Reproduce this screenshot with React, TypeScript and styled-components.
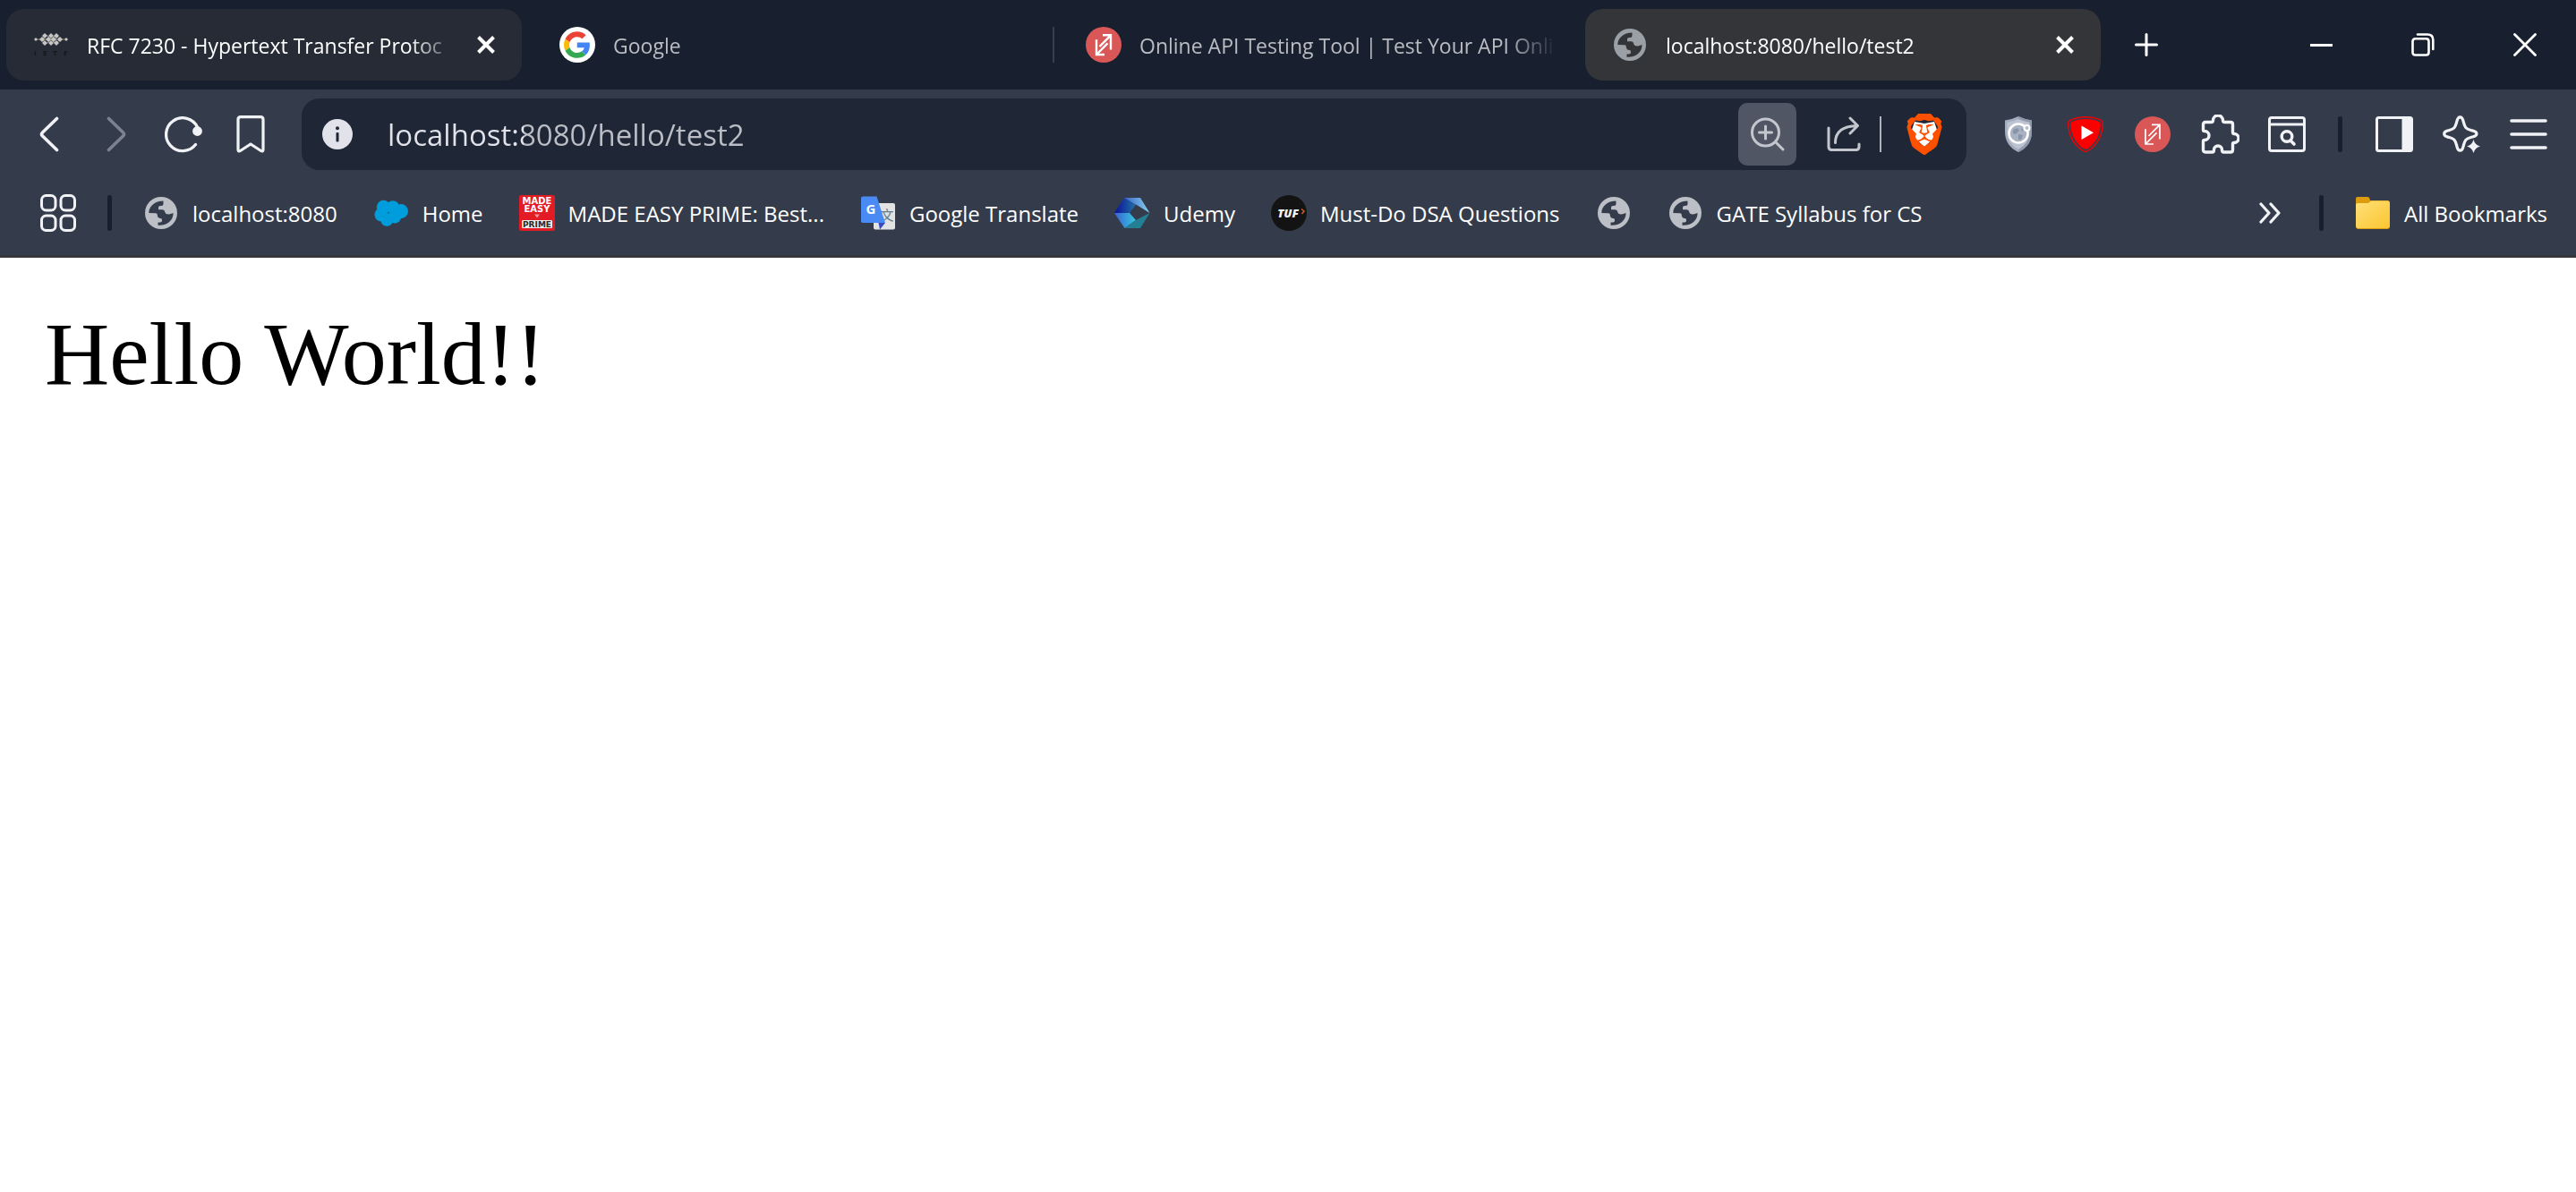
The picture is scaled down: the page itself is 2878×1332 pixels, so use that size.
import React from "react";
import styled, { createGlobalStyle } from "styled-components";
import { SiBrave } from "react-icons/si";

const GlobalStyle = createGlobalStyle`
  * { box-sizing: border-box; }
  body { margin: 0; background: #ffffff; }
  button, input { font: inherit; color: inherit; border: 0; padding: 0; margin: 0; background: none; outline: none; }
  svg { display: block; flex: none; }
`;

const uiFont = `"Open Sans", "Noto Sans", "Noto Sans CJK SC", sans-serif`;

const Chrome = styled.header`
  font-family: ${uiFont};
  font-size: 24px;
  line-height: 32px;
  color: #ffffff;
  background: #343c4c;
  border-bottom: 3px solid #35353b;
`;

const TabStrip = styled.div`
  display: flex;
  align-items: center;
  height: 100px;
  padding-left: 7px;
  font-size: 23px;
  background: #182030;
`;

const TabItem = styled.div<{ $fill: string; $dim?: boolean }>`
  display: flex;
  align-items: center;
  flex: 0 1 576px;
  min-width: 0;
  height: 80px;
  padding: 0 20px 0 30px;
  border-radius: 20px;
  background: ${(p) => p.$fill};
  color: ${(p) => (p.$dim ? "#babcc1" : "#ffffff")};
`;

const TabTitle = styled.button`
  display: flex;
  align-items: center;
  gap: 20px;
  flex: 1;
  min-width: 0;
  text-align: left;
`;

const IconSlot = styled.span`
  display: flex;
  align-items: center;
  justify-content: center;
  flex: none;
  width: 40px;
  height: 40px;
`;

const Label = styled.span`
  padding-top: 2px;
  white-space: nowrap;
`;

const FadeText = styled(Label)`
  flex: 1;
  min-width: 0;
  overflow: hidden;
  mask-image: linear-gradient(to left, transparent 0, #000 56px);
`;

const CloseButton = styled.button`
  display: flex;
  align-items: center;
  justify-content: flex-end;
  width: 50px;
  height: 40px;
  padding-right: 10px;
`;

const TabGap = styled.span`
  display: flex;
  justify-content: center;
  flex: none;
  width: 12px;
`;

const TabLine = styled.span`
  width: 2px;
  height: 40px;
  background: #3a4049;
`;

const NewTabButton = styled.button`
  display: flex;
  align-items: center;
  justify-content: center;
  width: 80px;
  height: 80px;
  margin-left: 11px;
`;

const WindowControls = styled.div`
  display: flex;
  margin-left: auto;
`;

const WindowButton = styled.button`
  display: flex;
  align-items: center;
  justify-content: center;
  width: 114px;
  height: 98px;
`;

const Toolbar = styled.div`
  display: flex;
  align-items: center;
  height: 100px;
  padding: 0 16px 0 17px;
`;

const ToolButton = styled.button`
  display: flex;
  align-items: center;
  justify-content: center;
  flex: none;
  width: 75px;
  height: 70px;
`;

const Divider = styled.span<{ $slot: number }>`
  display: flex;
  justify-content: center;
  flex: none;
  width: ${(p) => p.$slot}px;
  &::before {
    content: "";
    width: 5px;
    height: 40px;
    border-radius: 3px;
    background: #182030;
  }
`;

const AddressBar = styled.form`
  display: flex;
  align-items: center;
  flex: 1;
  min-width: 0;
  height: 80px;
  margin: 0 20px;
  padding: 0 10px 0 20px;
  border-radius: 20px;
  background: #1f2737;
`;

const AddressInput = styled.input`
  flex: 1;
  min-width: 0;
  height: 60px;
  margin-left: 36px;
  font-size: 33px;
  background: linear-gradient(90deg, #e2e3ea 0 152px, #bcbec6 152px);
  background-clip: text;
  -webkit-text-fill-color: transparent;
`;

const ZoomButton = styled.button`
  display: flex;
  align-items: center;
  justify-content: center;
  width: 65px;
  height: 70px;
  border-radius: 10px;
  background: #505664;
`;

const ShareButton = styled.button`
  display: flex;
  align-items: center;
  justify-content: center;
  width: 65px;
  height: 70px;
  margin-left: 20px;
`;

const AddressLine = styled.span`
  width: 2px;
  height: 40px;
  margin: 0 10px 0 8px;
  background: #b0b3ba;
`;

const BookmarkBar = styled.nav`
  display: flex;
  align-items: center;
  height: 85px;
  padding: 0 32px 10px 25px;
`;

const AppsButton = styled.button`
  display: flex;
  align-items: center;
  justify-content: center;
  flex: none;
  width: 80px;
  height: 60px;
`;

const BookmarkList = styled.div`
  display: flex;
  gap: 40px;
  flex: 1;
  min-width: 0;
  padding-left: 20px;
`;

const Bookmark = styled.a`
  display: flex;
  align-items: center;
  gap: 15px;
  flex: none;
  color: inherit;
  text-decoration: none;
`;

const FolderButton = styled.button`
  display: flex;
  align-items: center;
  gap: 15px;
  flex: none;
  margin-left: 20px;
`;

const Page = styled.main`
  padding: 50px;
  font-family: "Liberation Serif", "Times New Roman", serif;
  font-size: 100px;
  line-height: 116px;
  color: #000000;
`;

const Globe = ({ fill, ink }: { fill: string; ink: string }) => (
  <svg width="36" height="36" viewBox="0 0 36 36">
    <circle cx="18" cy="18" r="18" fill={fill} />
    <path
      d="M4.3 18C4.3 10.5 11 4.4 20.5 4.4V7.5Q20.5 10 18 10H17Q15 10 15 12V14.2H19.5Q22 14.5 22.3 17L23 18.5Q24 19.5 27 19.5L31.6 18C31.6 26 25 32.4 14.5 31.8V28.6H17Q19 28.6 19 26.5V25.5Q19 24 17.5 24Q14 24 13.8 20Q13.8 18.3 12 18.3Z"
      fill={ink}
    />
  </svg>
);

const knots = [
  [2, 8, 2], [36, 8, 2], [9, 8, 3], [12, 4, 3], [12, 12, 3], [16, 8, 3],
  [19, 4, 3], [19, 12, 3], [22, 8, 3], [25, 4, 3], [25, 12, 3], [29, 8, 3],
];

const IetfIcon = () => (
  <svg width="38" height="28" viewBox="0 0 38 28">
    <path d="M1 8H37M9 8L14 3L24 13L29 8L24 3L14 13Z" stroke="#9c8a55" strokeWidth="1" fill="none" />
    {knots.map(([x, y, r]) => (
      <path key={`${x}-${y}`} d={`M${x} ${y - r}L${x + r} ${y}L${x} ${y + r}L${x - r} ${y}Z`} fill="#c3c5c9" />
    ))}
    <g fontFamily="DejaVu Sans" fontSize="7" fontWeight="700" fill="#14171d">
      <text x="0" y="26">I</text>
      <text x="10" y="26">E</text>
      <text x="21" y="26">T</text>
      <text x="33" y="26">F</text>
    </g>
  </svg>
);

const GoogleIcon = () => (
  <svg width="40" height="40" viewBox="0 0 40 40">
    <circle cx="20" cy="20" r="20" fill="#ffffff" />
    <g transform="translate(5 5.3) scale(.615)">
      <path fill="#EA4335" d="M24 9.5c3.54 0 6.71 1.22 9.21 3.6l6.85-6.85C35.9 2.38 30.47 0 24 0 14.62 0 6.51 5.38 2.56 13.22l7.98 6.19C12.43 13.72 17.74 9.5 24 9.5z" />
      <path fill="#4285F4" d="M46.98 24.55c0-1.57-.15-3.09-.38-4.55H24v9.02h12.94c-.58 2.96-2.26 5.48-4.78 7.18l7.73 6c4.51-4.18 7.09-10.36 7.09-17.65z" />
      <path fill="#FBBC05" d="M10.53 28.59c-.48-1.45-.76-2.99-.76-4.59s.27-3.14.76-4.59l-7.98-6.19C.92 16.46 0 20.12 0 24c0 3.88.92 7.54 2.56 10.78l7.97-6.19z" />
      <path fill="#34A853" d="M24 48c6.48 0 11.93-2.13 15.89-5.81l-7.73-6c-2.15 1.45-4.92 2.3-8.16 2.3-6.26 0-11.57-4.22-13.47-9.91l-7.98 6.19C6.51 42.62 14.62 48 24 48z" />
    </g>
  </svg>
);

const ApiIcon = ({ weight }: { weight: number }) => (
  <svg width="40" height="40" viewBox="0 0 40 40">
    <circle cx="20" cy="20" r="20" fill="#d95757" />
    <path
      d="M19 9.3H28V25.6M12 14.3V31H21M15.5 22L27.5 9.8M12.5 30.5L24.5 18.3"
      fill="none"
      stroke="#ffffff"
      strokeWidth={weight}
    />
  </svg>
);

const SalesforceIcon = () => (
  <svg width="38" height="32" viewBox="0 0 40 32">
    <g fill="#009ddc">
      <circle cx="11" cy="9" r="8" />
      <circle cx="22" cy="9" r="7.5" />
      <circle cx="31.5" cy="14" r="8.5" />
      <circle cx="8.5" cy="18" r="8" />
      <circle cx="15" cy="24" r="7.5" />
      <circle cx="24" cy="20" r="8" />
    </g>
  </svg>
);

const MadeEasyIcon = () => (
  <svg width="40" height="40" viewBox="0 0 40 40">
    <rect width="40" height="40" rx="2" fill="#e21b24" />
    <rect x="3" y="28" width="34" height="9" rx="1" fill="#eeeeee" />
    <path d="M17 21.5H23L20 25.5Z" fill="#e99499" />
    <g fontFamily="DejaVu Sans" fontWeight="700" textAnchor="middle">
      <text x="20" y="10" fontSize="10" fill="#ffffff">MADE</text>
      <text x="20" y="19" fontSize="10" fill="#ffffff">EASY</text>
      <text x="20" y="36" fontSize="9" fill="#2a2a2a">PRIME</text>
    </g>
  </svg>
);

const TranslateIcon = () => (
  <svg width="38" height="38" viewBox="0 0 38 38">
    <rect x="14" y="8" width="24" height="29.5" rx="2" fill="#e3e3e3" />
    <path d="M19.5 30H27L21 37.5Z" fill="#3a4bc0" />
    <text x="29" y="27" fontFamily="Noto Sans CJK SC" fontSize="15" textAnchor="middle" fill="#5f7f8c">文</text>
    <path d="M2 .5H17.5L27 30H2Q0 30 0 28V2.5Q0 .5 2 .5Z" fill="#4a8af4" />
    <text x="11" y="20" fontFamily="Open Sans" fontWeight="700" fontSize="15" textAnchor="middle" fill="#ffffff">G</text>
  </svg>
);

const UdemyIcon = () => (
  <svg width="40" height="36" viewBox="0 0 40 36">
    <defs>
      <linearGradient id="gemLeft"><stop stopColor="#0a0f9b" /><stop offset="1" stopColor="#2373a3" /></linearGradient>
      <linearGradient id="gemTop"><stop stopColor="#3b63c9" /><stop offset="1" stopColor="#86d2ee" /></linearGradient>
      <linearGradient id="gemLow"><stop stopColor="#3a62d4" /><stop offset="1" stopColor="#35c7dc" /></linearGradient>
    </defs>
    <path d="M0 18L11 1L24 8.5L17 18Z" fill="url(#gemLeft)" />
    <path d="M11 1H29L39.5 18L24 8.5Z" fill="url(#gemTop)" />
    <path d="M0 18H17L24 26L11.5 35Z" fill="url(#gemLow)" />
    <path d="M24 26L39.5 18L29 35H11.5Z" fill="#237f93" />
  </svg>
);

const TufIcon = () => (
  <svg width="40" height="40" viewBox="0 0 40 40">
    <circle cx="20" cy="20" r="20" fill="#131313" />
    <text x="19" y="24.5" fontFamily="Open Sans" fontWeight="800" fontStyle="italic" fontSize="13" textAnchor="middle" fill="#f2f2f2">TUF</text>
    <path d="M34 15.5L37 18L34.5 21" fill="none" stroke="#c9602c" strokeWidth="1.5" />
  </svg>
);

const GuardIcon = () => (
  <svg width="32" height="40" viewBox="0 0 32 40">
    <path d="M16 0Q23 3.5 31 4.5V17Q31 33 16 40Q1 33 1 17V4.5Q9 3.5 16 0Z" fill="#a3adbd" />
    <path d="M16 0Q23 3.5 31 4.5V17Q31 33 16 40Z" fill="#8f9aac" />
    <path d="M16 3Q22 6 28.5 6.8V17Q28.5 30 16 37Q3.5 30 3.5 17V6.8Q10 6 16 3Z" fill="#bcc4d1" />
    <circle cx="16" cy="19" r="10.5" fill="#a9b2c2" stroke="#ffffff" strokeWidth="2.5" />
    <path d="M10 15L15 13L17 16L13 20L10 19ZM16 20L21 21L19 26H16ZM19 13L22 15L20 17Z" fill="#8994a8" />
    <circle cx="25.5" cy="13" r="3" fill="#b5bdcb" stroke="#ffffff" strokeWidth="2" />
  </svg>
);

const PlayShieldIcon = () => (
  <svg width="40" height="40" viewBox="0 0 40 40">
    <path d="M20 .7Q30 .7 37.5 4.5Q39.5 5.5 39.3 8.5Q38.5 28 23 38.5Q20 40.2 17 38.5Q1.5 28 .7 8.5Q.5 5.5 2.5 4.5Q10 .7 20 .7Z" fill="none" stroke="#f60000" strokeWidth="1.4" />
    <path d="M20 3Q29 3 35.5 6.2Q37 7 36.9 9Q36 26.5 22.5 36Q20 37.6 17.5 36Q4 26.5 3.1 9Q3 7 4.5 6.2Q11 3 20 3Z" fill="#fb0000" />
    <path d="M15.5 10.5V26L29 18.2Z" fill="#ffffff" />
  </svg>
);

const FolderIcon = () => (
  <svg width="38" height="36" viewBox="0 0 38 36">
    <defs>
      <linearGradient id="folder" x1="0" y1="0" x2="1" y2="1"><stop stopColor="#ffe07a" /><stop offset="1" stopColor="#fbc62f" /></linearGradient>
    </defs>
    <path d="M0 6V2Q0 0 2 0H13Q15 0 15.5 2L16 4H35Q38 4 38 7V33Q38 36 35 36H3Q0 36 0 33Z" fill="#dc9c0e" />
    <path d="M0 9Q0 7 2 7H14L17 4.5H36Q38 4.5 38 7V32Q38 35 35 35H3Q0 35 0 32Z" fill="url(#folder)" />
  </svg>
);

const Stroke = ({ w, h, d, weight = 3, color = "#f1f2f5" }: { w: number; h: number; d: string; weight?: number; color?: string }) => (
  <svg width={w} height={h} viewBox={`0 0 ${w} ${h}`} fill="none" stroke={color} strokeWidth={weight} strokeLinecap="round" strokeLinejoin="round">
    <path d={d} />
  </svg>
);

const CloseCross = () => (
  <svg width="20" height="20" viewBox="0 0 20 20">
    <path d="M1.5 1.5L18.5 18.5M18.5 1.5L1.5 18.5" stroke="#ffffff" strokeWidth="4" />
  </svg>
);

const ReloadIcon = () => (
  <svg width="42" height="42" viewBox="0 0 42 42" fill="none">
    <path d="M34.5 32.5A18.4 18.4 0 1 1 36.5 13" stroke="#f1f2f5" strokeWidth="3.3" strokeLinecap="round" />
    <circle cx="36.5" cy="17.5" r="5.4" fill="#f1f2f5" />
  </svg>
);

const InfoIcon = () => (
  <svg width="34" height="34" viewBox="0 0 34 34">
    <circle cx="17" cy="17" r="17" fill="#e2e3ea" />
    <circle cx="17" cy="10.3" r="2" fill="#1f2737" />
    <rect x="15.5" y="15" width="3" height="10.5" rx="1" fill="#1f2737" />
  </svg>
);

const AppsIcon = () => (
  <svg width="40" height="42" viewBox="0 0 40 42" fill="none" stroke="#f1f2f5" strokeWidth="3">
    <rect x="1.5" y="1.5" width="15.5" height="16.5" rx="5" />
    <rect x="23" y="1.5" width="15.5" height="16.5" rx="5" />
    <rect x="1.5" y="24" width="15.5" height="16.5" rx="5" />
    <rect x="23" y="24" width="15.5" height="16.5" rx="5" />
  </svg>
);

const BraveIcon = () => (
  <svg width="40" height="46" viewBox="0 0 40 46">
    <path d="M9 9L20 11L31 9L34 18L29 29L20 37L11 29L6 18Z" fill="#ffffff" />
    <SiBrave x="-3" y="0" size={46} color="#ff5000" />
  </svg>
);

const PuzzleIcon = () => (
  <Stroke
    w={44}
    h={44}
    weight={3.4}
    d="M6 8.5H12.5Q14.5 8.5 14.5 6.5A5.5 5.5 0 0 1 25.5 6.5Q25.5 8.5 27.5 8.5H34Q36.5 8.5 36.5 11V19.5Q36.5 21.5 38 21.5A5 5 0 0 1 38 31.5Q36.5 31.5 36.5 33V39.5Q36.5 42 34 42H26.5Q24.5 42 24.5 39.5A4.5 4.5 0 0 0 15.5 39.5Q15.5 42 13.5 42H6Q3.5 42 3.5 39.5V30Q3.5 28.5 5 28.5A4.7 4.7 0 0 0 5 18.5Q3.5 18.5 3.5 17V11Q3.5 8.5 6 8.5Z"
  />
);

const FindPageIcon = () => (
  <svg width="42" height="40" viewBox="0 0 42 40" fill="none" stroke="#f1f2f5" strokeWidth="3">
    <rect x="1.5" y="1.5" width="39" height="37" rx="2.5" />
    <path d="M2 9H40" />
    <circle cx="21" cy="22.5" r="5.8" strokeWidth="3.4" />
    <path d="M25 27L29 31" strokeWidth="3.6" strokeLinecap="round" />
  </svg>
);

const SidePanelIcon = () => (
  <svg width="42" height="40" viewBox="0 0 42 40">
    <rect x="1.5" y="1.5" width="39" height="37" rx="2" fill="none" stroke="#f1f2f5" strokeWidth="3" />
    <path d="M29.5 1H41V39H29.5Z" fill="#f1f2f5" />
  </svg>
);

const SparkleIcon = () => (
  <svg width="42" height="42" viewBox="0 0 42 42">
    <path
      d="M19.5 1.8C22.5 1.8 22.5 4.5 23.5 8C25 13.5 26 15 31.5 16.5C35 17.5 38 17.8 38 20.5C38 23.5 35 23.5 31.5 24.5C26 26 25 27.5 23.5 33C22.5 36.5 22.5 39.2 19.5 39.2C16.5 39.2 16.5 36.5 15.5 33C14 27.5 13 26 7.5 24.5C4 23.5 1.7 23.5 1.7 20.5C1.7 17.8 4 17.5 7.5 16.5C13 15 14 13.5 15.5 8C16.5 4.5 16.5 1.8 19.5 1.8Z"
      fill="none"
      stroke="#f1f2f5"
      strokeWidth="3.2"
    />
    <path d="M34.5 27Q36 33 42 34.5Q36 36 34.5 42Q33 36 27 34.5Q33 33 34.5 27Z" fill="#f1f2f5" stroke="#343c4c" strokeWidth="4" paintOrder="stroke" />
  </svg>
);

const tabs = [
  { title: "RFC 7230 - Hypertext Transfer Protoc", icon: <IetfIcon />, fill: "#262b36", closable: true },
  { title: "Google", icon: <GoogleIcon />, fill: "transparent", dim: true, line: true },
  { title: "Online API Testing Tool | Test Your API Onli", icon: <ApiIcon weight={2.4} />, fill: "transparent", dim: true },
  { title: "localhost:8080/hello/test2", icon: <Globe fill="#9aa0a6" ink="#343539" />, fill: "#343539", closable: true },
];

const barGlobe = <Globe fill="#bcbfc5" ink="#343c4c" />;

const bookmarks = [
  { label: "localhost:8080", icon: barGlobe },
  { label: "Home", icon: <SalesforceIcon /> },
  { label: "MADE EASY PRIME: Best...", icon: <MadeEasyIcon /> },
  { label: "Google Translate", icon: <TranslateIcon /> },
  { label: "Udemy", icon: <UdemyIcon /> },
  { label: "Must-Do DSA Questions", icon: <TufIcon /> },
  { label: "", icon: barGlobe },
  { label: "GATE Syllabus for CS", icon: barGlobe },
];

export default function App() {
  return (
    <>
      <GlobalStyle />
      <Chrome>
        <TabStrip>
          {tabs.map((tab, index) => (
            <React.Fragment key={tab.title}>
              {index > 0 && <TabGap>{tabs[index - 1].line && <TabLine />}</TabGap>}
              <TabItem $fill={tab.fill} $dim={tab.dim}>
                <TabTitle type="button">
                  <IconSlot>{tab.icon}</IconSlot>
                  <FadeText>{tab.title}</FadeText>
                </TabTitle>
                {tab.closable && (
                  <CloseButton type="button" aria-label="Close tab">
                    <CloseCross />
                  </CloseButton>
                )}
              </TabItem>
            </React.Fragment>
          ))}
          <NewTabButton type="button" aria-label="New tab">
            <Stroke w={26} h={26} d="M13 1.5V24.5M1.5 13H24.5" color="#ffffff" />
          </NewTabButton>
          <WindowControls>
            <WindowButton type="button" aria-label="Minimize">
              <svg width="25" height="3" viewBox="0 0 25 3"><rect width="25" height="3" fill="#ffffff" /></svg>
            </WindowButton>
            <WindowButton type="button" aria-label="Restore">
              <Stroke w={26} h={26} weight={2.6} color="#ffffff" d="M4.5 6.3H16.5Q19.5 6.3 19.5 9.3V21.5Q19.5 24.5 16.5 24.5H4.5Q1.5 24.5 1.5 21.5V9.3Q1.5 6.3 4.5 6.3ZM7 1.5H18Q24.3 1.5 24.3 7.5V18" />
            </WindowButton>
            <WindowButton type="button" aria-label="Close window">
              <Stroke w={26} h={26} weight={2.8} color="#ffffff" d="M1.5 1.5L24.5 24.5M24.5 1.5L1.5 24.5" />
            </WindowButton>
          </WindowControls>
        </TabStrip>

        <Toolbar>
          <ToolButton type="button" aria-label="Back">
            <Stroke w={22} h={40} weight={3.6} d="M19.5 2.5L3.5 18Q1.5 20 3.5 22L19.5 37.5" />
          </ToolButton>
          <ToolButton type="button" aria-label="Forward">
            <Stroke w={22} h={40} weight={3.6} color="#7c828e" d="M2.5 2.5L18.5 18Q20.5 20 18.5 22L2.5 37.5" />
          </ToolButton>
          <ToolButton type="button" aria-label="Reload"><ReloadIcon /></ToolButton>
          <ToolButton type="button" aria-label="Bookmark this page">
            <Stroke w={32} h={42} weight={3.2} d="M5 1.6H27Q30 1.6 30 4.6V38Q30 41 27.5 39.5L16 32L4.5 39.5Q2 41 2 38V4.6Q2 1.6 5 1.6Z" />
          </ToolButton>

          <AddressBar onSubmit={(event) => event.preventDefault()}>
            <IconSlot><InfoIcon /></IconSlot>
            <AddressInput aria-label="Address" defaultValue="localhost:8080/hello/test2" spellCheck={false} />
            <ZoomButton type="button" aria-label="Zoom">
              <Stroke w={38} h={38} color="#c4c6ce" d="M31.5 17A15 15 0 1 1 1.5 17A15 15 0 1 1 31.5 17ZM27.5 27.5L36 36M16.5 10V24M9.5 17H23.5" />
            </ZoomButton>
            <ShareButton type="button" aria-label="Share">
              <Stroke w={38} h={40} color="#c4c6ce" d="M2 13V34Q2 37.5 5.5 37.5H32.5Q36 37.5 36 34V31M9.5 29.5Q9.5 11 34 10.5M26 2L34.5 10.5L26 19" />
            </ShareButton>
            <AddressLine />
            <ToolButton type="button" aria-label="Brave Shields"><BraveIcon /></ToolButton>
          </AddressBar>

          <ToolButton type="button" aria-label="Privacy guard"><GuardIcon /></ToolButton>
          <ToolButton type="button" aria-label="Video ad blocker"><PlayShieldIcon /></ToolButton>
          <ToolButton type="button" aria-label="API tester"><ApiIcon weight={1.7} /></ToolButton>
          <ToolButton type="button" aria-label="Extensions"><PuzzleIcon /></ToolButton>
          <ToolButton type="button" aria-label="Search tabs"><FindPageIcon /></ToolButton>
          <Divider $slot={45} />
          <ToolButton type="button" aria-label="Side panel"><SidePanelIcon /></ToolButton>
          <ToolButton type="button" aria-label="Assistant"><SparkleIcon /></ToolButton>
          <ToolButton type="button" aria-label="Menu">
            <Stroke w={42} h={36} weight={3.6} d="M2 3H40M2 18H40M2 33H40" />
          </ToolButton>
        </Toolbar>

        <BookmarkBar aria-label="Bookmarks">
          <AppsButton type="button" aria-label="Apps"><AppsIcon /></AppsButton>
          <Divider $slot={35} />
          <BookmarkList>
            {bookmarks.map((item, index) => (
              <Bookmark key={index} href="#" aria-label={item.label || "Saved page"}>
                <IconSlot>{item.icon}</IconSlot>
                {item.label && <Label>{item.label}</Label>}
              </Bookmark>
            ))}
          </BookmarkList>
          <AppsButton type="button" aria-label="More bookmarks">
            <Stroke w={24} h={24} weight={3.2} d="M2 2L11 12L2 22M13 2L22 12L13 22" />
          </AppsButton>
          <Divider $slot={35} />
          <FolderButton type="button">
            <IconSlot><FolderIcon /></IconSlot>
            <Label>All Bookmarks</Label>
          </FolderButton>
        </BookmarkBar>
      </Chrome>
      <Page>Hello World!!</Page>
    </>
  );
}
